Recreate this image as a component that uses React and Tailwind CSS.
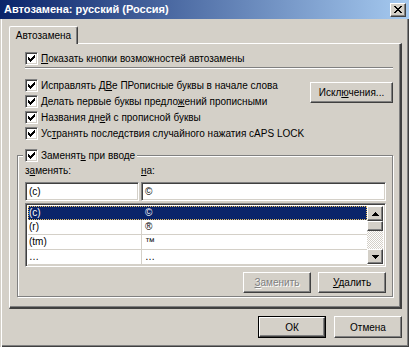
import React from "react";

const raised =
  "border border-t-white border-l-white border-r-[#404040] border-b-[#404040] shadow-[inset_-1px_-1px_0_#808080] bg-[#d4d0c8]";
const sunken =
  "border border-t-[#808080] border-l-[#808080] border-r-white border-b-white shadow-[inset_1px_1px_0_#404040,inset_-1px_-1px_0_#d4d0c8] bg-white";

const CHECK_PIXELS = [
  [6, 0], [5, 1], [6, 1], [0, 2], [4, 2], [5, 2], [6, 2],
  [0, 3], [1, 3], [3, 3], [4, 3], [5, 3],
  [0, 4], [1, 4], [2, 4], [3, 4], [4, 4],
  [1, 5], [2, 5], [3, 5], [2, 6],
];

const Check = () => (
  <span className={`w-[13px] h-[13px] shrink-0 flex items-center justify-center ${sunken}`}>
    <svg width="7" height="7" viewBox="0 0 7 7" shapeRendering="crispEdges">
      {CHECK_PIXELS.map(([x, y]) => (
        <rect key={`${x}-${y}`} x={x} y={y} width="1" height="1" fill="#000" />
      ))}
    </svg>
  </span>
);

// text with one underlined mnemonic letter
const Label = ({ before, key_, after }) => (
  <span className="whitespace-nowrap">
    {before}
    <u className="underline-offset-[1px]">{key_}</u>
    {after}
  </span>
);

const CheckRow = ({ children }) => (
  <div className="flex items-center gap-[3px] h-[13px]">
    <Check />
    {children}
  </div>
);

const Button = ({ children, width = "w-[68px]", disabled, isDefault }) => {
  const inner = (
    <div
      className={`h-full flex items-center justify-center ${raised} ${
        disabled ? "text-[#808080] [text-shadow:1px_1px_0_#fff]" : "text-black"
      }`}
    >
      {children}
    </div>
  );
  if (isDefault) {
    return <div className={`${width} h-[22px] border border-black shrink-0`}>{inner}</div>;
  }
  return <div className={`${width} h-[21px] shrink-0`}>{inner}</div>;
};

const rows = [
  { from: "(c)", to: "©", selected: true },
  { from: "(r)", to: "®" },
  { from: "(tm)", to: "™" },
  { from: "…", to: "…" },
];

const ArrowUp = () => (
  <svg width="7" height="4" viewBox="0 0 7 4" shapeRendering="crispEdges">
    <path d="M3 0h1v1h1v1h1v1h1v1H0V3h1V2h1V1h1z" fill="#000" />
  </svg>
);

const ArrowDown = () => (
  <svg width="7" height="4" viewBox="0 0 7 4" shapeRendering="crispEdges">
    <path d="M0 0h7v1H6v1H5v1H4v1H3V3H2V2H1V1H0z" fill="#000" />
  </svg>
);

const ReplaceList = () => (
  <div className={`w-[361px] h-[64px] flex p-[2px] ${sunken}`}>
    <div className="flex-1 flex flex-col">
      {rows.map((r, i) => (
        <div
          key={i}
          className={`h-[15px] flex ${
            r.selected
              ? "bg-[#0a246a] text-white outline-1 outline-dotted outline-[#e8c060] -outline-offset-1"
              : "border-b border-[#d4d0c8]"
          }`}
        >
          <div
            className={`w-[114px] pl-[1px] leading-[14px] ${
              r.selected ? "" : "border-r border-[#d4d0c8]"
            }`}
          >
            {r.from}
          </div>
          <div className="flex-1 pl-[3px] leading-[14px]">{r.to}</div>
        </div>
      ))}
    </div>
    <div className="w-[16px] flex flex-col">
      <div className={`h-[15px] flex items-center justify-center ${raised}`}>
        <ArrowUp />
      </div>
      <div className={`h-[10px] ${raised}`} />
      <div className="flex-1 bg-[repeating-conic-gradient(#ffffff_0_25%,#d4d0c8_0_50%)] bg-[length:2px_2px]" />
      <div className={`h-[15px] flex items-center justify-center ${raised}`}>
        <ArrowDown />
      </div>
    </div>
  </div>
);

export default function App() {
  return (
    <div
      className="w-[409px] h-[347px] flex flex-col bg-[#d4d0c8] text-[10px] leading-[13px] text-black shadow-[inset_1px_0_0_#d4d0c8,inset_2px_0_0_#fff,inset_-1px_-1px_0_#404040,inset_-2px_-2px_0_#808080] overflow-hidden"
      style={{ fontFamily: '"Liberation Sans", Arial, sans-serif' }}
    >
      {/* Title bar */}
      <div className="h-[19px] shrink-0 flex items-center justify-between pl-[4px] pr-[3px] bg-[linear-gradient(90deg,#0a246a,#a6caf0)]">
        <span className="text-white font-bold text-[11px]">Автозамена: русский (Россия)</span>
        <div className={`w-[16px] h-[14px] flex items-center justify-center ${raised}`}>
          <svg width="8" height="7" viewBox="0 0 8 7" shapeRendering="crispEdges">
            <path
              d="M0 0h2v1h1v1h2V1h1V0h2v1H7v1H6v1H5v1h1v1h1v1h1v1H6V6H5V5H3v1H2v1H0V6h1V5h1V4h1V3H2V2H1V1H0z"
              fill="#000"
            />
          </svg>
        </div>
      </div>

      {/* Body */}
      <div className="flex-1 flex flex-col pl-[9px] pr-[7px] pt-[7px]">
        {/* Tab strip */}
        <div className="flex">
          <div className="relative z-10 -mb-[1px] w-[69px] h-[18px] bg-[#d4d0c8] border-l border-t border-white border-r border-r-[#404040] rounded-t-[2px] shadow-[inset_-1px_0_0_#808080] flex items-center justify-center">
            Автозамена
          </div>
        </div>

        {/* Tab panel */}
        <div className="h-[266px] border-t border-l border-white border-r-2 border-b-2 border-r-[#404040] border-b-[#404040] shadow-[inset_-1px_-1px_0_#808080] px-[7px] pt-[8px] flex flex-col">
          <div className="pl-[8px] flex flex-col">
            <CheckRow>
              <Label before="" key_="П" after="оказать кнопки возможностей автозамены" />
            </CheckRow>
            <div className="mt-[2px] h-[2px] border-t border-[#808080] border-b border-b-white" />

            <div className="mt-[10px] flex justify-between">
              <div className="flex-1 min-w-0 flex flex-col gap-[3px]">
                <CheckRow>
                  <Label before="Исправлять Д" key_="В" after="е ПРописные буквы в начале слова" />
                </CheckRow>
                <CheckRow>
                  <Label before="Делать первые буквы предло" key_="ж" after="ений прописными" />
                </CheckRow>
                <CheckRow>
                  <Label before="Названия дн" key_="е" after="й с прописной буквы" />
                </CheckRow>
                <CheckRow>
                  <Label before="Ус" key_="т" after="ранять последствия случайного нажатия cAPS LOCK" />
                </CheckRow>
              </div>
              <div className="mt-[3px]">
                <Button width="w-[83px]">
                  <Label before="Искл" key_="ю" after="чения..." />
                </Button>
              </div>
            </div>
          </div>

          {/* Group box */}
          <div className="relative mt-[15px] h-[142px] border border-[#808080] shadow-[inset_1px_1px_0_#fff,1px_1px_0_#fff] pl-[7px] pt-[8px]">
            <div className="absolute -top-[7px] left-[5px] px-[2px] bg-[#d4d0c8]">
              <CheckRow>
                <Label before="Заменят" key_="ь" after=" при вводе" />
              </CheckRow>
            </div>

            <div className="w-[361px] flex flex-col">
              <div className="h-[13px] flex gap-[2px]">
                <div className="w-[114px]">
                  <Label before="з" key_="а" after="менять:" />
                </div>
                <div>
                  <Label before="" key_="н" after="а:" />
                </div>
              </div>
              <div className="mt-[5px] flex gap-[2px]">
                <div className={`w-[114px] h-[19px] pl-[3px] flex items-center ${sunken}`}>(c)</div>
                <div className={`flex-1 h-[19px] pl-[3px] flex items-center ${sunken}`}>©</div>
              </div>
              <div className="mt-[2px]">
                <ReplaceList />
              </div>
              <div className="mt-[5px] flex justify-end gap-[7px]">
                <Button disabled>
                  <Label before="" key_="З" after="аменить" />
                </Button>
                <Button>
                  <Label before="" key_="У" after="далить" />
                </Button>
              </div>
            </div>
          </div>
        </div>

        {/* Dialog buttons */}
        <div className="mt-[7px] flex justify-end gap-[8px]">
          <Button isDefault>ОК</Button>
          <div className="w-[68px] h-[22px]">
            <div className={`h-full flex items-center justify-center ${raised}`}>Отмена</div>
          </div>
        </div>
      </div>
    </div>
  );
}
